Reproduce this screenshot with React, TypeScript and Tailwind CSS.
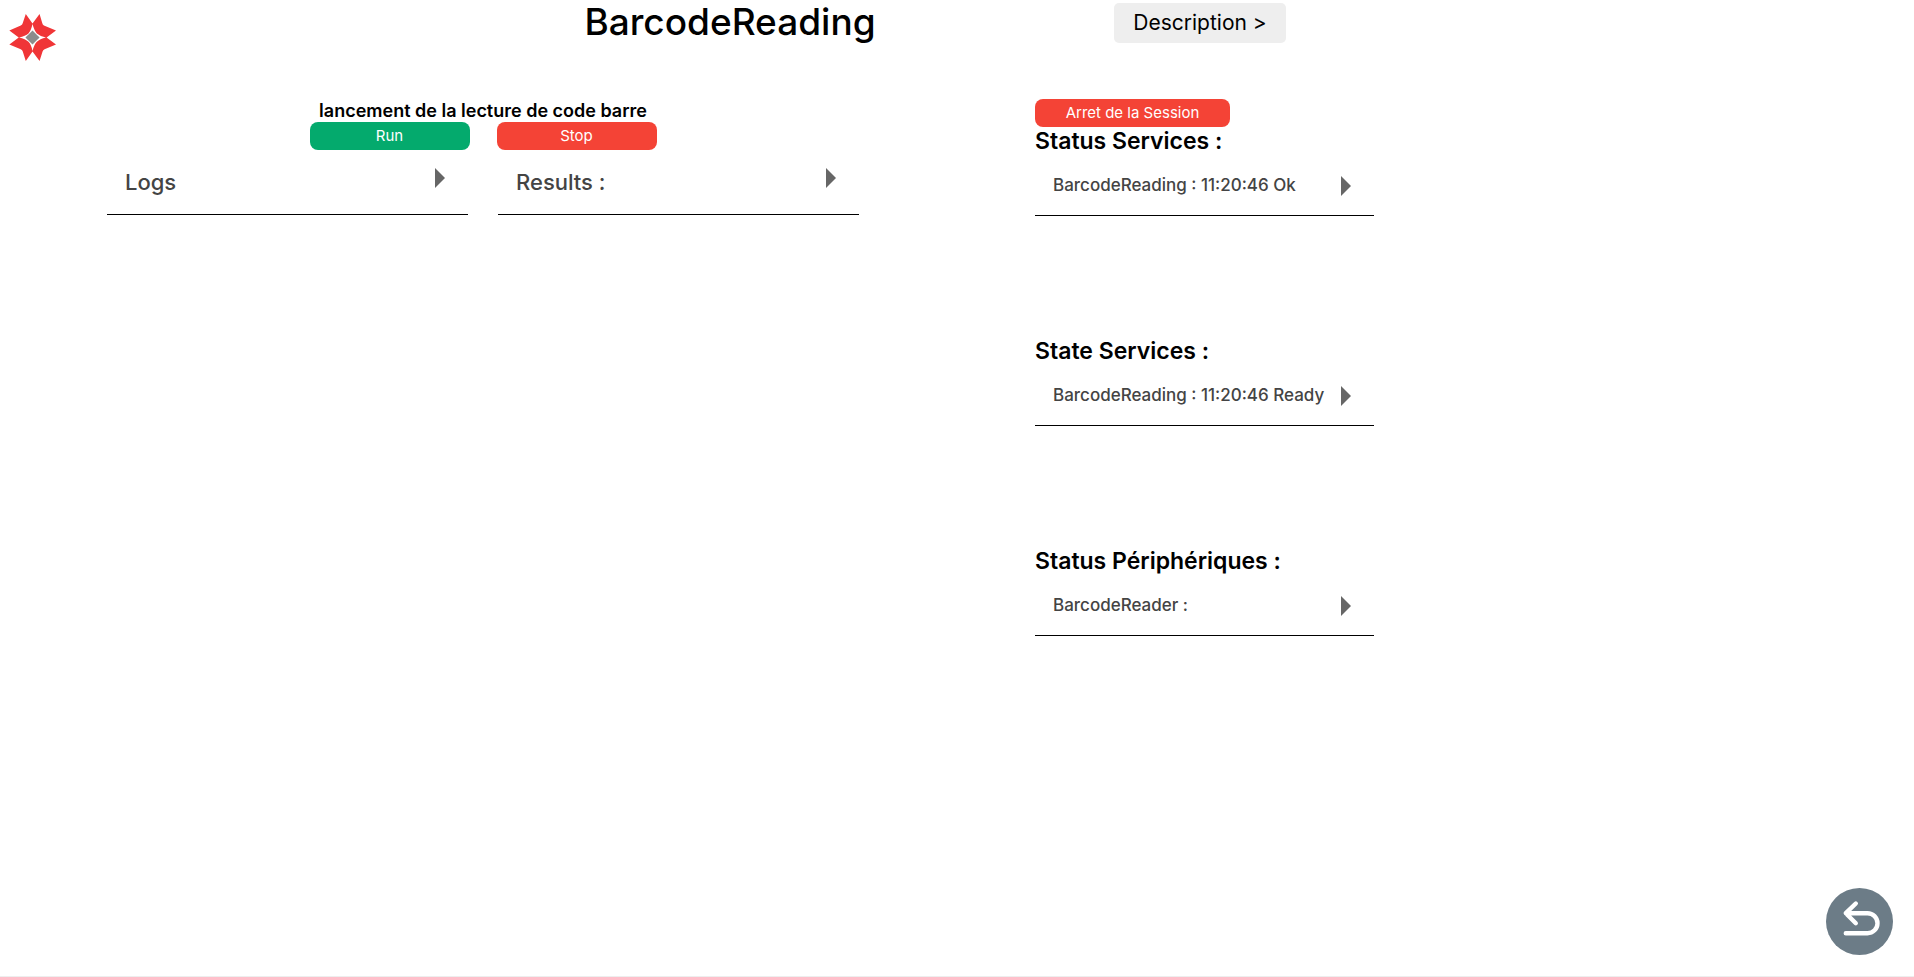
import { useState } from "react";

function Logo() {
  return (
    <svg viewBox="0 0 140 140" className="size-[47px]" role="img" aria-label="Logo">
      <path
        fill="#f03537"
        d="M50 0 70 28 91 0 99 27Q100 32 104 34L140 49 112 70 140 91 106 105Q101 107 100 112L91 140 70 112 50 140 41 112Q40 107 35 105L1 91 29 70 1 49 35 34Q40 32 41 27Z"
      />
      <path fill="#fff" d="M70 30Q75 49 83 58Q92 66 110 70Q92 74 83 83Q75 91 70 110Q66 91 58 83Q49 74 30 70Q49 66 58 58Q66 49 70 30Z" />
      <path fill="#8c8c8c" d="M70 49 91 70 70 91 49 70Z" />
    </svg>
  );
}

type DisclosureProps = {
  label: string;
  size: "large" | "small";
};

function Disclosure({ label, size }: DisclosureProps) {
  const [open, setOpen] = useState(false);
  const large = size === "large";
  return (
    <button
      type="button"
      aria-expanded={open}
      onClick={() => setOpen(!open)}
      className={
        "flex w-full items-center justify-between border-b border-black pr-[23px] pl-[18px] text-left font-medium whitespace-nowrap text-[#444] " +
        (large ? "h-[65px] text-[22px]" : "h-[60px] text-[17px]")
      }
    >
      {label}
      <svg
        viewBox="0 0 10 20"
        className={"h-5 w-2.5 shrink-0 " + (large ? "mb-2 " : "") + (open ? "rotate-90" : "")}
        aria-hidden="true"
      >
        <path fill="#666" d="M0 0 10 10 0 20Z" />
      </svg>
    </button>
  );
}

const services = [
  { title: "Status Services :", entry: "BarcodeReading : 11:20:46 Ok" },
  { title: "State Services :", entry: "BarcodeReading : 11:20:46 Ready" },
  { title: "Status Périphériques :", entry: "BarcodeReader :" },
];

export default function App() {
  return (
    <div className="flex min-h-screen flex-col border-b border-[#eee] bg-white font-['Inter',sans-serif] text-black">
      <header className="grid h-[99px] grid-cols-[504fr_452fr_488fr_470fr] items-start">
        <a href="#accueil" className="mt-3.5 ml-[9px] w-fit">
          <Logo />
        </a>
        <h1 className="text-center text-[37px] leading-[44px] font-medium">BarcodeReading</h1>
        <button
          type="button"
          className="mt-[3px] h-10 w-[172px] justify-self-center rounded-[5px] bg-[#eee] text-[21px]"
        >
          Description &gt;
        </button>
      </header>

      <main className="grid grow grid-cols-[107fr_752fr_176fr_339fr_540fr] items-start">
        <section className="col-start-2">
          <h2 className="text-center text-[18px] leading-[23px] font-semibold">
            lancement de la lecture de code barre
          </h2>
          <div className="flex justify-center gap-[27px] text-[15px] text-white">
            <button type="button" className="h-7 w-40 rounded-lg bg-[#04aa6d]">
              Run
            </button>
            <button type="button" className="h-7 w-40 rounded-lg bg-[#f44336]">
              Stop
            </button>
          </div>
          <div className="grid grid-cols-2 gap-[30px]">
            <Disclosure label="Logs" size="large" />
            <Disclosure label="Results :" size="large" />
          </div>
        </section>

        <section className="col-start-4">
          <button type="button" className="block h-7 w-[195px] rounded-lg bg-[#f44336] text-[15px] text-white">
            Arret de la Session
          </button>
          <div className="flex flex-col gap-[121px]">
            {services.map((service) => (
              <div key={service.title}>
                <h2 className="text-[23px] leading-[29px] font-semibold whitespace-nowrap">{service.title}</h2>
                <Disclosure label={service.entry} size="small" />
              </div>
            ))}
          </div>
        </section>
      </main>

      <button type="button" aria-label="Retour" className="fixed right-[21px] bottom-[22px] rounded-full">
        <svg viewBox="0 0 67 67" className="size-[67px]" fill="none" aria-hidden="true">
          <circle cx="33.5" cy="33.5" r="33.5" fill="#6c7c87" />
          <path
            stroke="#fff"
            strokeWidth="4.4"
            strokeLinecap="round"
            strokeLinejoin="round"
            d="M29.8 15.5 19.8 25.2 29.8 35.2M20 25.2H41.5A10 10 0 0 1 41.5 45.2H19.8"
          />
        </svg>
      </button>
    </div>
  );
}
